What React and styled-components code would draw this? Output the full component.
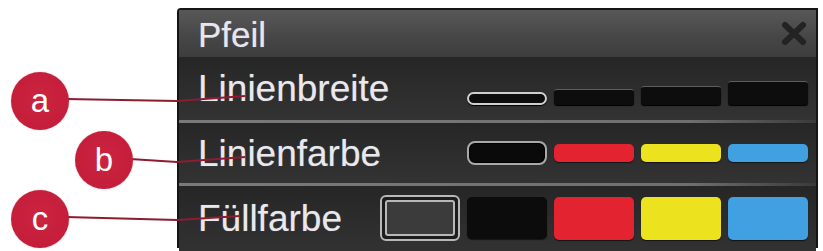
import React from "react";
import styled, { createGlobalStyle } from "styled-components";

const Global = createGlobalStyle`
  html, body { margin: 0; padding: 0; background: #ffffff; }
  body { font-family: "Liberation Sans", Arial, sans-serif; }
`;

const Stage = styled.div`
  position: relative;
  width: 823px;
  height: 251px;
  box-sizing: border-box;
  padding: 8px 0 0 177px;
  overflow: hidden;
`;

const Panel = styled.div`
  width: 641px;
  height: 240px;
  box-sizing: border-box;
  border: 2px solid #151515;
  border-top-left-radius: 4px;
  background: #2c2c2c;
  display: flex;
  flex-direction: column;
`;

const TitleBar = styled.div`
  height: 47px;
  flex: none;
  display: flex;
  align-items: center;
  justify-content: space-between;
  padding: 0 9px 0 19px;
  background: linear-gradient(#585858, #474747 55%, #3d3d3d);
`;

const Title = styled.span`
  font-size: 35px;
  color: #e6e6ee;
  line-height: 1;
  margin-top: 2px;
  text-shadow: 0 0 1px rgba(255, 255, 255, 0.4);
`;

const CloseIcon = styled.svg`
  width: 26px;
  height: 25px;
  filter: blur(0.6px);
`;

const Row = styled.div`
  position: relative;
  flex: none;
  height: ${(p) => p.$h}px;
  display: flex;
  align-items: center;
  justify-content: space-between;
  padding: 0 8px ${(p) => p.$pb || 0}px 19px;
  background: linear-gradient(#262626, #2e2e2e 60%, #333333);
  border-bottom: ${(p) => (p.$sep ? "3px solid transparent" : "none")};
  border-image: ${(p) =>
    p.$sep
      ? "linear-gradient(90deg, #7a7a7a, #6f6f6f 80%, #3a3a3a) 1"
      : "none"};
  border-image-width: 0 0 3px 0;
`;

const Label = styled.span`
  font-size: 37px;
  line-height: 1;
  color: #e8e8ee;
  text-shadow: 0 0 1px rgba(255, 255, 255, 0.35);
`;

const Swatches = styled.div`
  display: grid;
  grid-template-columns: repeat(${(p) => p.$n}, 80px);
  column-gap: 7px;
  align-items: ${(p) => p.$align || "center"};
  height: ${(p) => p.$h}px;
  margin-top: ${(p) => p.$mt || 0}px;
`;

const LineSwatch = styled.div`
  box-sizing: border-box;
  height: ${(p) => p.$h}px;
  background: #0d0d0d;
  border-radius: ${(p) => (p.$selected ? "7px" : "3px")};
  border: ${(p) => (p.$selected ? "2px solid #cfcfcf" : "none")};
  border-top: ${(p) => (p.$selected ? "2px solid #cfcfcf" : "1px solid #5e5e5e")};
  box-shadow: 0 1px 1px #000;
`;

const ColorSwatch = styled.div`
  box-sizing: border-box;
  height: ${(p) => p.$h}px;
  background: ${(p) => p.$c};
  border-radius: ${(p) => p.$r || 5}px;
  border: ${(p) => (p.$selected ? "2px solid #a9a9a9" : "none")};
  box-shadow: ${(p) => (p.$selected ? "inset 0 0 0 1px #000" : "0 1px 1px rgba(0,0,0,0.6)")};
`;

const EmptyFill = styled.div`
  box-sizing: border-box;
  height: 46px;
  border: 2px solid #b8b8b8;
  border-radius: 6px;
  padding: 3px;
  background: #1c1c1c;
  display: flex;
`;

const EmptyInner = styled.div`
  flex: 1;
  border: 2px solid #b8b8b8;
  border-radius: 3px;
  background: #3b3b3b;
`;

const Overlay = styled.svg`
  position: absolute;
  left: 0;
  top: 0;
  width: 823px;
  height: 251px;
  pointer-events: none;
`;

const Callout = styled.div`
  position: absolute;
  left: ${(p) => p.$x - 29}px;
  top: ${(p) => p.$y - 29}px;
  width: 58px;
  height: 58px;
  border-radius: 50%;
  background: radial-gradient(circle at 50% 45%, #cc2340 0%, #c41e3a 70%, #b81a35 100%);
  color: #ffffff;
  font-size: 33px;
  line-height: 58px;
  text-align: center;
  box-shadow: 0 0 1px rgba(180, 20, 50, 0.6);
`;

const lineSwatches = [
  { h: 13, selected: true },
  { h: 16 },
  { h: 19 },
  { h: 24 },
];

const colors = ["#e3232f", "#ece21e", "#41a0e2"];

export default function App() {
  return (
    <>
      <Global />
      <Stage>
        <Panel>
          <TitleBar>
            <Title>Pfeil</Title>
            <CloseIcon viewBox="0 0 26 25">
              <path
                d="M4 4 L22 21 M22 4 L4 21"
                stroke="#232323"
                strokeWidth="6"
                strokeLinecap="round"
              />
            </CloseIcon>
          </TitleBar>
          <Row $h={63} $sep>
            <Label>Linienbreite</Label>
            <Swatches $n={4} $h={26} $mt={6} $align="end">
              {lineSwatches.map((s, i) => (
                <LineSwatch key={i} $h={s.h} $selected={s.selected} />
              ))}
            </Swatches>
          </Row>
          <Row $h={60} $sep>
            <Label>Linienfarbe</Label>
            <Swatches $n={4} $h={24}>
              <ColorSwatch $h={24} $c="#0a0a0a" $r={8} $selected />
              {colors.map((c) => (
                <ColorSwatch key={c} $h={18} $c={c} />
              ))}
            </Swatches>
          </Row>
          <Row $h={64} $pb={8}>
            <Label>Füllfarbe</Label>
            <Swatches $n={5} $h={46}>
              <EmptyFill>
                <EmptyInner />
              </EmptyFill>
              <ColorSwatch $h={42} $c="#0c0c0c" />
              {colors.map((c) => (
                <ColorSwatch key={c} $h={43} $c={c} />
              ))}
            </Swatches>
          </Row>
        </Panel>
        <Overlay viewBox="0 0 823 251">
          <g fill="none" stroke="#8e1b30" strokeWidth="2" strokeLinejoin="round">
            <polyline points="66,99 177,101 245,96" />
            <polyline points="130,159 177,162 245,157" />
            <polyline points="66,217 177,220 240,216" />
          </g>
        </Overlay>
        <Callout $x={40} $y={101}>a</Callout>
        <Callout $x={104} $y={160}>b</Callout>
        <Callout $x={40} $y={219}>c</Callout>
      </Stage>
    </>
  );
}
